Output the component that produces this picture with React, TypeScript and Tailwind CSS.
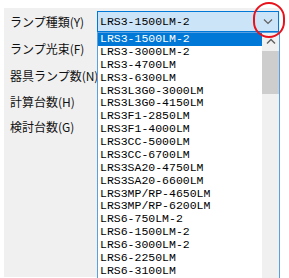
import React from 'react';

const items = [
  'LRS3-1500LM-2',
  'LRS3-3000LM-2',
  'LRS3-4700LM',
  'LRS3-6300LM',
  'LRS3L3G0-3000LM',
  'LRS3L3G0-4150LM',
  'LRS3F1-2850LM',
  'LRS3F1-4000LM',
  'LRS3CC-5000LM',
  'LRS3CC-6700LM',
  'LRS3SA20-4750LM',
  'LRS3SA20-6600LM',
  'LRS3MP/RP-4650LM',
  'LRS3MP/RP-6200LM',
  'LRS6-750LM-2',
  'LRS6-1500LM-2',
  'LRS6-3000LM-2',
  'LRS6-2250LM',
  'LRS6-3100LM',
];

const labels = ['ランプ種類(Y)', 'ランプ光束(F)', '器具ランプ数(N)', '計算台数(H)', '検討台数(G)'];

const jp = { fontFamily: '"Noto Sans CJK JP", sans-serif' };
const mono = { fontFamily: '"Liberation Mono", monospace' };

const App: React.FC = () => {
  return (
    <div className="w-[289px] h-[278px] bg-white overflow-hidden">
      <div className="relative ml-[4px] mt-[8px] w-[276px] h-[269px] bg-[#f0f0f0]">
        {/* labels */}
        <div className="flex flex-col pt-[5px] pl-[6px] text-[12px] text-[#111]" style={jp}>
          {labels.map((l, i) => (
            <div key={l} className={`leading-[18px] ${i < 2 ? 'h-[27px]' : 'h-[25.5px]'}`}>
              {l}
            </div>
          ))}
        </div>

        {/* combobox */}
        <div className="absolute left-[93px] top-[3px] w-[182px] h-[21px] bg-[#cce4f7] border border-[#0078d7] flex items-center pl-[2px]">
          <span className="text-[11.5px] text-black" style={mono}>LRS3-1500LM-2</span>
          <svg className="absolute right-[5px] top-[6px]" width="10" height="7" viewBox="0 0 10 7">
            <path d="M1 1.5 L5 5.5 L9 1.5" fill="none" stroke="#606060" strokeWidth="1.2" />
          </svg>
        </div>

        {/* dropdown list */}
        <div className="absolute left-[93px] top-[24px] w-[183px] h-[260px] bg-white border border-[#5a9fe0] flex">
          <div className="flex-1 flex flex-col">
            {items.map((it, i) => (
              <div
                key={it}
                className={`h-[12.875px] leading-[12.875px] pl-[2px] text-[11.5px] whitespace-nowrap ${
                  i === 0 ? 'bg-[#0078d7] text-white' : 'text-black'
                }`}
                style={mono}
              >
                {it}
              </div>
            ))}
          </div>
          <div className="w-[17px] bg-[#f0f0f0] flex flex-col items-center">
            <svg className="mt-[5px]" width="10" height="7" viewBox="0 0 10 7">
              <path d="M1 5.5 L5 1.5 L9 5.5" fill="none" stroke="#606060" strokeWidth="1.4" />
            </svg>
            <div className="mt-[6px] w-[17px] h-[43px] bg-[#cdcdcd]" />
          </div>
        </div>

        {/* red annotation circle */}
        <div className="absolute left-[249px] top-[-6px] w-[32px] h-[36px] rounded-full border-[2.5px] border-[#e8121c]" />
      </div>
    </div>
  );
};

export default App;
